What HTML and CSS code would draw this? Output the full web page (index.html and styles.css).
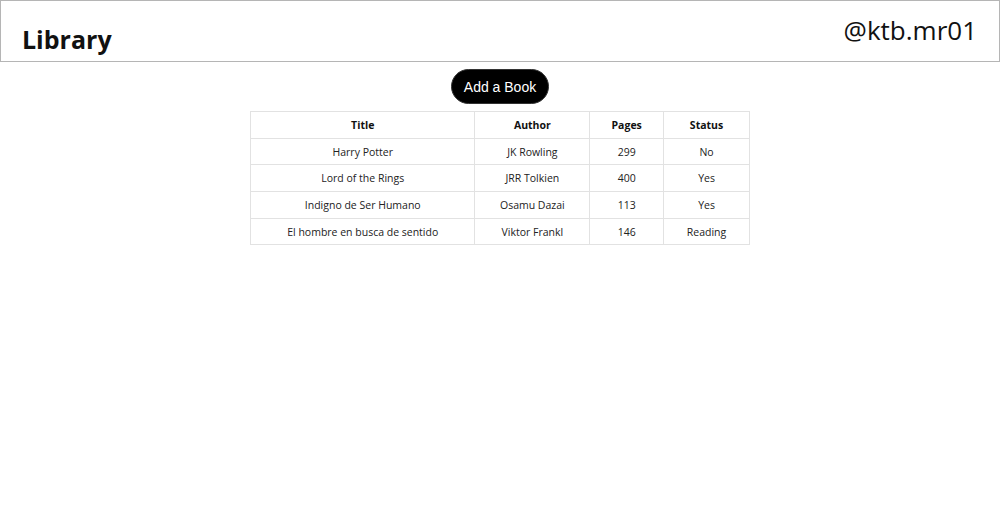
FILE: index.html
```html
<!DOCTYPE html>
<html>
<head>
<meta charset="utf-8">
<link rel="stylesheet" href="styles.css">
</head>
<body>
<header class="top">
  <h1 class="brand">Library</h1>
  <div class="handle">@ktb.mr01</div>
</header>
<main class="content">
  <button class="add-btn">Add a Book</button>
  <table class="books">
    <thead>
      <tr><th class="c-title">Title</th><th class="c-author">Author</th><th class="c-pages">Pages</th><th class="c-status">Status</th></tr>
    </thead>
    <tbody>
      <tr><td>Harry Potter</td><td>JK Rowling</td><td>299</td><td>No</td></tr>
      <tr><td>Lord of the Rings</td><td>JRR Tolkien</td><td>400</td><td>Yes</td></tr>
      <tr><td>Indigno de Ser Humano</td><td>Osamu Dazai</td><td>113</td><td>Yes</td></tr>
      <tr><td>El hombre en busca de sentido</td><td>Viktor Frankl</td><td>146</td><td>Reading</td></tr>
    </tbody>
  </table>
</main>
</body>
</html>
```

FILE: styles.css
```css
html, body {
  margin: 0;
  padding: 0;
  background: #fff;
  font-family: "Open Sans", "Noto Sans", sans-serif;
  color: #111;
}
.top {
  box-sizing: border-box;
  height: 62px;
  border: 1px solid #b5b5b5;
  display: flex;
  justify-content: space-between;
  padding: 0 22px 0 21px;
}
.brand {
  margin: 0;
  align-self: flex-end;
  font-size: 25px;
  font-weight: 700;
  line-height: 1;
  padding-bottom: 9px;
}
.handle {
  font-size: 26px;
  line-height: 1;
  padding-top: 16px;
}
.content {
  display: flex;
  flex-direction: column;
  align-items: center;
  padding-top: 7px;
}
.add-btn {
  box-sizing: border-box;
  height: 35px;
  padding: 0 12px;
  background: #000;
  color: #fff;
  border: 1px solid #333;
  border-radius: 18px;
  font-family: "Liberation Sans", Arial, sans-serif;
  font-size: 14px;
  cursor: pointer;
}
.books {
  margin-top: 7px;
  width: 500px;
  border-collapse: collapse;
  border: 1px solid #d6d6d6;
  font-size: 10.5px;
  color: #222;
}
.books th, .books td {
  border: 1px solid #e2e2e2;
  height: 25.7px;
  padding: 0;
  text-align: center;
}
.books th { font-weight: 700; color: #111; }
.c-title { width: 224px; }
.c-author { width: 114px; }
.c-pages { width: 73px; }
.c-status { width: 85px; }
```
